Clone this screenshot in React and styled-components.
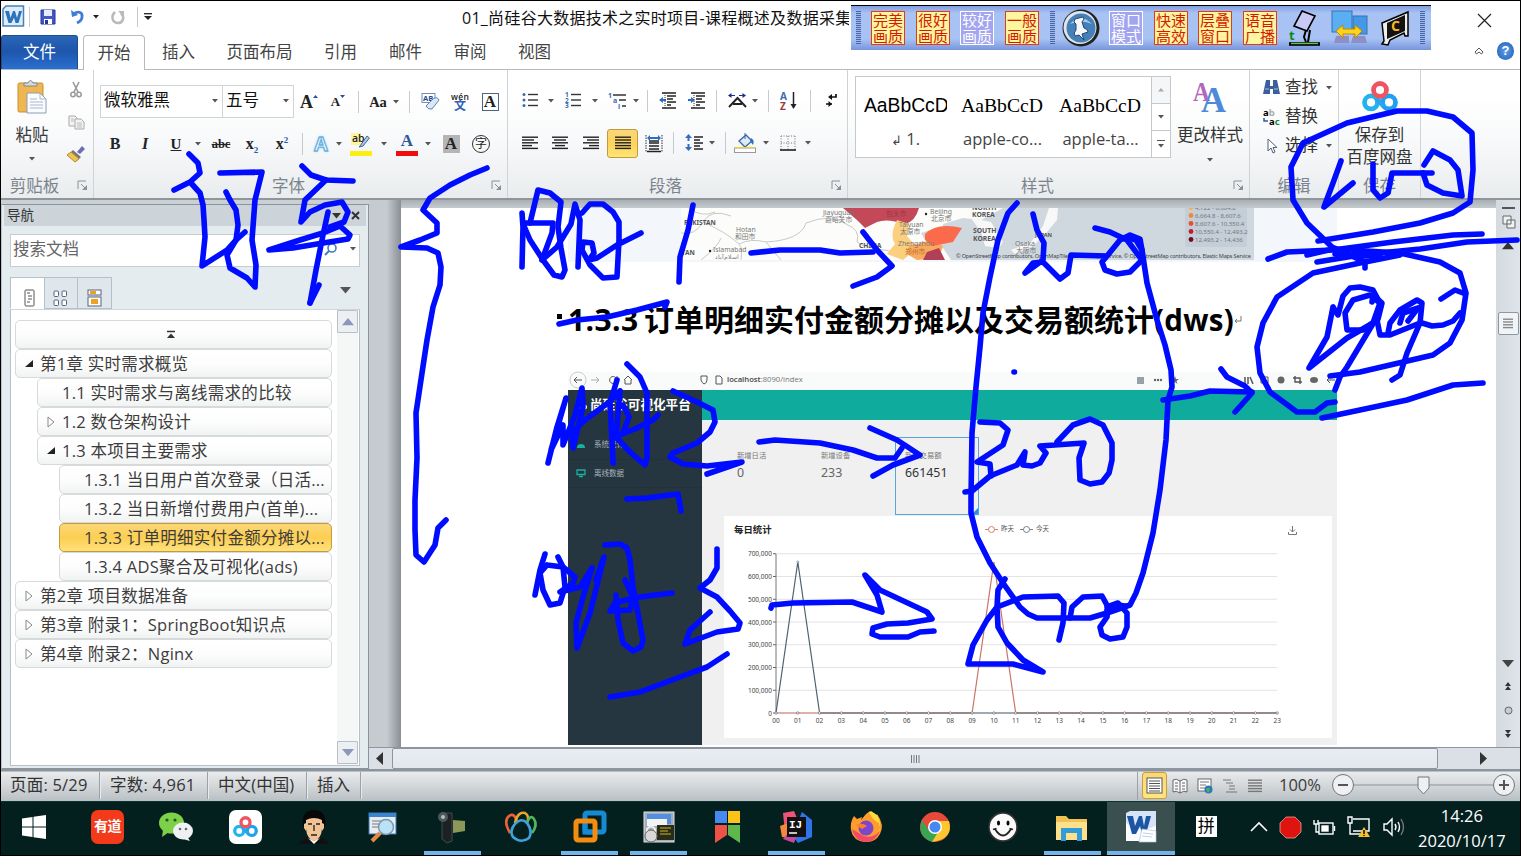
import React from 'react';
import styled, { createGlobalStyle, css } from 'styled-components';

const UI = '"Open Sans", "Noto Sans CJK SC", sans-serif';

const Global = createGlobalStyle`
  body { margin: 0; overflow: hidden; background: #000; font-family: ${UI}; }
  * { box-sizing: border-box; }
  svg { display: block; flex: none; overflow: visible; }
`;

/* ---------- window frame ---------- */
const Screen = styled.div`
  position: relative; width: 1521px; height: 856px; overflow: hidden;
  display: flex; flex-direction: column; background: #fff;
  border: 1px solid #000; font-size: 16.5px; line-height: 1; color: #3b3b3b; white-space: nowrap;
`;
const TitleBar = styled.header`
  height: 34px; flex: none; display: flex; align-items: center; padding-left: 1px; padding-bottom: 3px; background: #fff;
`;
const QuickSlot = styled.div`
  width: ${p => p.$w}px; flex: none; display: flex; justify-content: center;
`;
const VLine = styled.i`
  width: 1px; height: ${p => p.$h || 22}px; flex: none; background: ${p => p.$c || '#c4cacd'};
`;
const Title = styled.div`
  margin-left: 306px; width: 387px; overflow: hidden; font-size: 16px; letter-spacing: 0.27px; line-height: 26px; color: #111; padding-top: 3px;
`;
const TabRow = styled.nav`
  height: 35px; flex: none; display: flex; align-items: stretch; border-bottom: 1px solid #b6babf;
`;
const FileTab = styled.div`
  width: 77px; border-radius: 3px 3px 0 0; color: #fff; display: flex; align-items: center; justify-content: center;
  background: linear-gradient(#2b66b8, #1d56ab 45%, #2a6fd0); border: 1px solid #1e4d94; border-bottom: 0;
`;
const Tab = styled.div`
  width: ${p => p.$w}px; display: flex; align-items: center; justify-content: center; color: #444;
  ${p => p.$on && css`margin: 0 0 -1px 5px; border: 1px solid #b6babf; border-bottom: 0; border-radius: 4px 4px 0 0; background: #fff;`}
  ${p => !p.$on && 'padding-left: 2px;'}
`;
const TabEnd = styled.div`
  margin-left: auto; display: flex; align-items: center; gap: 13px; padding: 0 6px 3px 0;
`;
const Help = styled.div`
  width: 17px; height: 18px; border-radius: 9px; background: radial-gradient(#5d9de8, #1d5db4); color: #fff;
  font: bold 13px/18px "Liberation Sans", sans-serif; text-align: center;
`;

/* ---------- ribbon ---------- */
const Ribbon = styled.section`
  height: 130px; flex: none; display: flex; background: linear-gradient(#fff 20%, #f8f9fa 55%, #e9ecee);
  border-bottom: 2px solid #8e959b;
`;
const Group = styled.div`
  position: relative; width: ${p => p.$w}px; flex: none; display: flex; flex-direction: column; border-right: 1px solid #ced3d7;
`;
const GroupBody = styled.div`height: 104px; display: flex; ${p => p.$col && 'flex-direction: column;'}`;
const GroupLabel = styled.div`
  height: 24px; display: flex; align-items: center; justify-content: center; color: #7b848e; padding-right: ${p => p.$r || 0}px;
`;
const Launcher = styled.div`position: absolute; right: 5px; bottom: 7px;`;
const ToolRow = styled.div`
  height: ${p => p.$h}px; display: flex; align-items: center; padding-left: ${p => p.$l || 6}px; ${p => p.$t && `margin-top: ${p.$t}px;`}
`;
const Tool = styled.div`
  width: ${p => p.$w}px; margin-left: ${p => p.$ml || 0}px; flex: none; display: flex; align-items: center; justify-content: center;
  ${p => p.$on && css`height: 29px; border: 1px solid #c09a3c; border-radius: 3px; background: linear-gradient(#fbd77a, #fcd35c 50%, #ffe575);`}
`;
const Combo = styled.div`
  width: ${p => p.$w}px; height: 33px; margin-right: ${p => p.$mr || 0}px; border: 1px solid #cfd4d6; background: #fff; display: flex; align-items: center;
  justify-content: space-between; padding: 0 4px 2px 3px; color: #111; flex: none;
`;
const Glyph = styled.span`
  font-family: "Liberation Serif", serif; font-weight: ${p => p.$b ? 700 : 400}; font-size: ${p => p.$s || 18}px; color: ${p => p.$c || '#222'};
  font-style: ${p => p.$i ? 'italic' : 'normal'}; text-decoration: ${p => p.$u || 'none'}; line-height: 20px;
  sup, sub { font-size: 9px; color: #2a5caa; line-height: 0; }
`;
const BoxedA = styled(Glyph)`
  width: 17px; height: 18px; line-height: 16px; text-align: center;
  ${p => p.$shade ? 'background:#b5b5b5; line-height:18px;' : 'border: 1px solid #4b6584; background: #fff;'}
`;
const CircleChar = styled.span`
  width: 18px; height: 18px; border: 1px solid #333; border-radius: 9px; font-size: 12px; line-height: 15px; text-align: center; color: #222;
`;
const ColorMark = styled.div`
  display: flex; flex-direction: column; align-items: center; height: 24px; width: 22px;
  border-bottom: 5px solid ${p => p.$c};
  ${Glyph} { line-height: 18px; }
`;
const Outlined = styled(Glyph)`
  font-family: "Liberation Sans", sans-serif; color: #fff; -webkit-text-stroke: 1.3px #6ab0de; text-shadow: 0 0 3px #7cc4f0;
`;
const PasteCol = styled.div`width: 62px; display: flex; flex-direction: column; align-items: center; padding-top: 10px; gap: 13px;`;
const ClipCol = styled.div`display: flex; flex-direction: column; align-items: center; padding-top: 12px; gap: 16.5px; width: 26px;`;
const Gallery = styled.div`
  margin: 6px 0 0 7px; width: 316px; height: 82px; display: flex; border: 1px solid #c3c9cc; background: #fff; flex: none;
`;
const StyleItem = styled.div`
  width: ${p => p.$w}px; display: flex; flex-direction: column; align-items: center; overflow: hidden; padding-top: 17px; gap: 14px; color: #444;
  small { font-size: 13px; }
`;
const Preview = styled.div`
  font-family: ${p => p.$serif ? '"Liberation Serif", serif' : '"Liberation Sans", sans-serif'}; width: 83px; overflow: hidden;
  font-size: ${p => p.$serif ? 19.7 : 19.3}px; line-height: 23px; color: #000;
`;
const GalleryScroll = styled.div`
  margin-left: auto; width: 19px; display: flex; flex-direction: column; border-left: 1px solid #c3c9cc; background: #f5f6f7;
  div { flex: 1; display: flex; flex-direction: column; gap: 3px; align-items: center; justify-content: center; }
  div + div { border-top: 1px solid #c3c9cc; background: #fff; }
`;
const Dash = styled.i`width: 8px; height: 1px; background: #555;`;
const BigButton = styled.div`
  width: ${p => p.$w}px; display: flex; flex-direction: column; align-items: center; padding-top: 11px; gap: ${p => p.$gap}px; color: #333;
`;
const EditRow = styled.div`height: 29px; display: flex; align-items: center; padding-left: 10px; gap: 5px; color: #333; svg:last-child { margin-left: 3px; }`;
const IconBox = styled.div`width: 20px; display: flex; justify-content: center;`;

/* ---------- screen broadcast toolbar ---------- */
const CastBar = styled.div`
  position: absolute; left: 850px; top: 0; width: 580px; height: 49px; border-top: 4px solid #fff; display: flex; align-items: center;
  background: linear-gradient(#000 1px, #7f9ee0 1px, #a9c2f4 8px, #a9c2f4 75%, #7795dc); padding: 2px 0 2px 5px;
`;
const Grip = styled.i`width: 5px; height: 33px; margin-left: ${p => p.$ml || 0}px; background: repeating-linear-gradient(#4666a8 0 1px, #9fb7ea 1px 2px); flex: none;`;
const CastButton = styled.div`
  width: 34px; height: 34px; margin-left: ${p => p.$ml}px; flex: none; font: 15px/16px "Noto Sans CJK SC", sans-serif; text-align: center; white-space: pre-line;
  color: ${p => p.$off ? '#fff' : '#d41b00'}; background: ${p => p.$off ? '#a2a5f0' : '#fdf5a0'}; border: 1px solid ${p => p.$off ? '#fff' : '#e23a1c'};
`;
const CastIcon = styled.div`margin-left: ${p => p.$ml}px; flex: none;`;
const CloseX = styled.div`position: absolute; left: 1476px; top: 12px;`;

/* ---------- main split ---------- */
const Main = styled.main`height: 570px; flex: none; display: flex; background: #cbd0d5;`;
const NavPane = styled.aside`
  width: 368px; margin-top: 4px; display: flex; flex-direction: column; background: #e4ecf0; border: 1px solid #8b939b; border-left-color: #b9c3cb; border-bottom-width: 2px;
  padding: 0 2px;
`;
const NavHead = styled.div`
  height: 21px; display: flex; align-items: center; background: #ccd3d9; font-size: 13.5px; color: #333; padding: 0 6px 0 3px;
  svg { margin-left: auto; } svg + svg { margin-left: 10px; }
`;
const SearchBox = styled.div`
  margin: 8px 6px 0 6px; height: 33px; border: 1px solid #c5ccd2; background: #fff; display: flex; align-items: center; padding: 0 3px 3px 2px; color: #666;
  svg { margin-left: auto; } svg + svg { margin-left: 13px; }
`;
const NavTabs = styled.div`margin: 10px 6px 0 6px; height: 32px; display: flex; svg:last-child { margin: 10px 9px 0 auto; }`;
const NavTab = styled.div`
  width: 34.5px; border: 1px solid #b6c0c8; margin-right: -1px; display: flex; align-items: center; justify-content: center; background: ${p => p.$on ? '#fff' : '#dfe6ec'};
  border-bottom-color: ${p => p.$on ? '#fff' : '#b6c0c8'};
`;
const NavList = styled.div`
  flex: 1; margin: 0 6px 2px 6px; border: 1px solid #b6c0c8; border-top-color: #cfd6db; background: #fff; display: flex; padding: 0 1px 0 4px; justify-content: space-between;
`;
const Tree = styled.div`width: 317px; padding-top: 10px; display: flex; flex-direction: column; align-items: flex-end;`;
const TreeItem = styled.div`
  width: ${p => 317 - p.$lv * 22}px; height: 29px; flex: none; display: flex; align-items: center; border: 1.5px solid #d6dadb; border-radius: 5px;
  background: ${p => p.$on ? 'linear-gradient(#fbd777, #fcce52 50%, #ffe27a)' : 'linear-gradient(#fff, #fdfdfd 50%, #f1f3f3)'};
  ${p => p.$on && 'border-color:#c29b41;'} padding: 0 5px 0 0; color: #3c3c3c;
  ${p => p.$center && 'justify-content: center;'}
`;
const Twist = styled.span`width: 24px; display: flex; justify-content: center; flex: none; padding-left: 2px;`;
const Entry = styled.span`overflow: hidden; line-height: 22px; letter-spacing: 0.26px;`;
const NavScroll = styled.div`width: 21px; display: flex; flex-direction: column; justify-content: space-between; background: #f5f6f6; padding-bottom: 1px;`;
const ScrollBtn = styled.div`height: 23px; border: 1px solid #b9bfc6; background: #edf0f3; display: flex; align-items: center; justify-content: center; border-radius: 1px;`;

const DocColumn = styled.section`flex: 1; display: flex; flex-direction: column; min-width: 0;`;
const DocRow = styled.div`height: 547px; flex: none; display: flex; background: linear-gradient(#a8afb4, #c5cacd 8px);`;
const Gutter = styled.div`width: 32px; flex: none; background: linear-gradient(90deg, #c5cbcf 55%, #888f95);`;
const Page = styled.article`
  width: 1095px; margin-top: 8px; flex: none; background: #fff; display: flex; flex-direction: column; padding-left: 167px; overflow: hidden;
`;
const MapStrip = styled.div`width: 769px; height: 54px; display: flex; background: #f3f7fb; flex: none; svg { margin-left: 113px; background: #fcfcfa; overflow: hidden; }`;
const Heading = styled.h3`
  margin: 0 0 0 -12px; height: 110px; padding-top: 5px; flex: none; display: flex; align-items: center; font-size: 30px; font-weight: 700; color: #000;
`;
const HeadNum = styled.span`font-size: 30px; width: 76px; letter-spacing: 0.4px; margin-left: 2px;`;
const HeadTail = styled.span`font-size: 29.5px; letter-spacing: 0.3px;`;
const HBullet = styled.i`width: 5px; height: 5px; margin: 0 4px 6px 1px; background: #000;`;
const VScroll = styled.div`flex: 1; background: linear-gradient(90deg, #d5dae0, #dfe4ea); display: flex; flex-direction: column; align-items: center;`;
const Spacer = styled.i`height: ${p => p.$h}px; flex: none;`;
const VThumb = styled.div`
  width: 21px; height: 23px; border: 1px solid #8f979f; border-radius: 2px; background: #f1f4f7; display: flex; align-items: center; justify-content: center; flex: none;
`;
const HScroll = styled.div`height: 23px; display: flex; align-items: center; background: #dbe0e7; border-top: 1px solid #8d95a0; border-bottom: 1px solid #8d95a0; padding-left: 7px;`;
const HThumb = styled.div`
  width: 1046px; height: 21px; border: 1px solid #8d95a0; border-radius: 2px; background: linear-gradient(#e9edf2, #e2e7ed); display: flex; align-items: center; justify-content: center; margin: 0 42px 0 9px;
`;

/* ---------- dashboard figure ---------- */
const Shot = styled.div`width: 769px; height: 373px; display: flex; flex-direction: column; flex: none; background: #f0f0f0;`;
const UrlBar = styled.div`height: 18px; flex: none; background: #f9fafa; display: flex; align-items: center; padding: 0 3px 3px; font-size: 7.7px; color: #777; b { font-weight: 600; color: #444; }`;
const UrlTools = styled.svg`margin-left: auto;`;
const ShotBody = styled.div`flex: 1; display: flex; min-height: 0;`;
const Side = styled.div`width: 134px; background: #253641; color: #aab3b9; font-size: 7.5px;`;
const Brand = styled.div`height: 31px; color: #fff; font-size: 12.6px; font-weight: 700; display: flex; align-items: center; gap: 3px; padding-left: 7px;`;
const SideItem = styled.div`height: 28.5px; display: flex; align-items: center; gap: 8px; padding-left: 8px; border-bottom: 1px solid #22313b; &:nth-of-type(2) { margin-top: 10px; }`;
const Content = styled.div`flex: 1; display: flex; flex-direction: column;`;
const Teal = styled.div`height: 31px; flex: none; background: #0fab9d; border-bottom: 1px solid #e9f4f3;`;
const Cards = styled.div`height: 95px; flex: none; display: flex; padding: 16px 0 0 25px;`;
const Card = styled.div`
  width: 84px; height: 78px; padding: 12px 0 0 9px; display: flex; flex-direction: column; gap: 5px; font-size: 7.3px; line-height: 10px; color: #777; position: relative;
  border: 1px solid ${p => p.$on ? '#55a5dc' : 'transparent'};
  strong { font: 400 12.4px/15px "Noto Sans", sans-serif; color: ${p => p.$on ? '#333' : '#666'}; }
`;
const Corner = styled.i`position: absolute; right: 0; bottom: 0; border: 3px solid #2294e6; border-top-color: transparent; border-left-color: transparent;`;
const ChartPanel = styled.div`margin-left: 22px; width: 608px; height: 222px; background: #fff; flex: none; display: flex; flex-direction: column;`;
const ChartHead = styled.div`height: 28px; display: flex; align-items: center; padding: 0 35px 0 10px; font-size: 6.5px; color: #555; b { font-size: 9.4px; color: #222; width: 251px; }`;
const Legend = styled.span`display: flex; align-items: center; gap: 3px; flex: 1; padding-bottom: 2px; svg:nth-of-type(2) { margin-left: 3px; }`;

/* ---------- status bar ---------- */
const StatusBar = styled.footer`
  height: 31px; flex: none; display: flex; align-items: center; background: linear-gradient(#8b939b 1px, #e9ebed 2px, #d6dadc 45%, #b9bfc4);
`;
const StatusText = styled.div`
  width: ${p => p.$w}px; text-align: left; padding-left: ${p => p.$l}px; border-right: 1px solid #9aa2a8; box-shadow: 1px 0 #e8ebed; height: 27px; line-height: 25px; color: #333; flex: none; letter-spacing: ${p => p.$ls || 0}px;
`;
const ViewIcons = styled.div`margin-left: auto; display: flex; align-items: center; height: 28px; border-left: 1px solid #9aa2a8; padding-left: 4px;`;
const ViewBtn = styled.div`
  width: ${p => p.$w || 25}px; height: 27px; display: flex; align-items: center; justify-content: center;
  ${p => p.$on && 'border: 1px solid #c89f3c; border-radius: 3px; background: linear-gradient(#fbd77a, #ffe67c);'}
`;
const Zoom = styled.div`width: 65px; padding: 0 0 1px 12px;`;

/* ---------- taskbar ---------- */
const TaskBar = styled.footer`height: 54px; flex: none; display: flex; background: #03201f; border-top: 1px solid #0b3332; color: #fff;`;
const TaskButton = styled.div`
  width: ${p => p.$w || 68.93}px; flex: none; display: flex; align-items: center; justify-content: center; padding: 0 ${p => p.$pr || 0}px 3px 0; position: relative;
  background: ${p => p.$on ? '#3a504f' : 'transparent'};
`;
const Running = styled.i`position: absolute; bottom: 0; left: ${p => p.$full ? 0 : 6}px; right: ${p => p.$full ? 0 : 6}px; height: 4px; background: #74b4ea;`;
const RedTile = styled.div`width: 33px; height: 34px; border-radius: 7px; background: #f33a1b; font-weight: 700; font-size: 14px; line-height: 32px; text-align: center; letter-spacing: -0.5px;`;
const WhiteTile = styled.div`width: 33px; height: 34px; border-radius: 7px; background: #fff; display: flex; align-items: center; justify-content: center;`;
const Ime = styled.div`margin-left: 21px; width: 21px; height: 21px; align-self: center; background: #fff; color: #000; font-size: 17px; line-height: 20px; text-align: center; margin-bottom: 4px; flex: none;`;
const Tray = styled.div`margin-left: 33px; display: flex; align-items: center; gap: 12px; flex: none; padding-bottom: 3px;`;
const Clock = styled.div`margin-left: 10px; width: 98px; text-align: center; line-height: 25px; padding-top: 1px; font-size: 16.5px; flex: none;`;

/* ---------- handwriting ---------- */
const InkLayer = styled.svg`
  position: absolute; left: -1px; top: -1px; pointer-events: none; fill: none; stroke: #000cff; stroke-width: 5.6; stroke-linecap: round; stroke-linejoin: round;
`;
const strokes = [
  '189,154 198,163 200,173 190,182 174,190 190,182 200,193 203,205 204,220 205,237 202,266 227,250 236,240 245,232',
  '220,173 262,172 255,200 252,240 256,265 255,287 247,278 230,268 227,255 236,240 238,225 236,210 230,200 226,192',
  '302,166 311,175 326,180 353,181', '326,180 305,200 301,222 310,212 325,205 342,202 348,212 344,222 330,227',
  '269,250 300,240 323,233 340,226 350,235 348,239 323,243 293,248 269,250', '328,212 323,235 316,270 310,303', '310,303 319,285',
  '487,168 470,175 450,185 430,198 423,210 437,223 437,233 420,240 401,247 427,248 438,253 441,267 440,285 433,307 427,340 422,373 416,413 417,458 415,500 415,530 416,555 424,562 435,545 438,528 446,520',
  '522,213 523,227 522,267', '523,223 553,223 552,233 542,260',
  '530,223 538,190 550,193 561,202 558,227 561,248 565,270 562,277 554,275 543,260 530,240 524,226',
  '542,260 557,247 571,224 575,204 580,220 578,267',
  '582,213 590,204 603,204 613,212 619,222 619,240 617,277 603,278 590,265 582,250 583,242 592,243 594,253 589,260 597,258 617,245 641,233',
  '693,205 688,230 680,257 679,282', '751,253 780,250 820,250 840,253 873,252', '863,232 877,250 892,266 877,277 853,286',
  '559,324 577,320 607,317 637,310 667,302 665,307',
  '1017,203 1008,213 998,240 990,277 983,313 980,347 976,387 972,433 971,498 971,513 977,537 990,563 1003,583 1020,607 1028,614 1037,618 1090,618 1107,613 1130,605 1136,593 1143,573 1153,533 1160,490 1166,440 1168,400 1172,387 1171,370 1165,345 1157,320 1147,283 1142,250 1136,240 1127,238',
  '1033,214 1037,230 1044,243 1043,260 1025,273 1033,263 1043,262 1060,279 1068,273 1071,255 1107,256 1120,240 1130,235 1140,239 1142,250 1142,260 1130,272 1117,274 1105,270 1102,262 1107,256',
  '1095,228 1110,232 1127,240 1142,260', '1014,372 1014.5,372',
  '980,422 1000,423 1008,430 1003,445 977,462 990,464 991,476',
  '965,492 972,491 990,476 1017,465 1025,452 1023,465 1032,466 1040,463 1046,453 1040,446 1084,443 1079,458 1080,480 1090,484 1102,482 1109,473 1112,460 1112,443 1103,425 1090,419 1073,425 1057,442',
  '1163,400 1190,396 1210,391 1252,392', '1221,369 1227,377 1245,386 1252,393 1235,412',
  '1365,268 1365,262 1332,247 1307,223 1293,200 1291,167 1303,143 1347,123 1397,111 1427,111 1453,117 1472,133 1473,170 1470,202 1453,213 1420,223 1373,232 1318,241',
  '1341,161 1333,183 1324,207 1353,183', '1373,164 1373,190 1380,198 1388,193 1392,173 1432,173',
  '1424,165 1433,151 1450,160 1458,170 1462,196 1443,193 1427,185 1423,173',
  '1268,259 1287,252 1333,250 1393,242 1453,235 1482,234', '1317,262 1360,255 1420,249 1467,242 1517,240',
  '1307,255 1333,249 1400,253 1440,262 1460,273 1466,293 1462,320 1450,343 1433,355 1403,362 1360,372 1330,376',
  '1335,254 1360,256 1380,256', '1400,255 1360,263 1313,273 1277,297 1263,323 1257,347 1260,373 1270,392 1297,412 1315,412 1327,403 1335,402',
  '1322,418 1360,410 1407,400 1453,385 1483,383',
  '1333,307 1327,337 1309,368 1347,338 1373,323 1380,303 1373,290 1360,287 1350,288 1343,296 1338,315 1333,307',
  '1380,303 1370,295 1353,300 1345,313 1347,330 1363,330 1378,319 1382,303 1373,295 1372,302', '1377,317 1347,367 1340,377 1335,390',
  '1377,320 1380,335 1390,335 1420,323 1422,303 1417,300 1400,310 1390,323 1388,333', '1400,323 1403,313 1418,308 1408,321',
  '1420,323 1407,353 1400,375 1392,380', '1422,323 1432,326 1443,325 1453,321 1460,313', '1441,299 1455,290 1463,293',
  '548,463 557,427 566,398 551,450 563,425 563,445 575,415 582,388 583,407 573,448 571,433 585,420 608,403 620,391',
  '617,380 610,403 612,440 613,463', '620,391 616,437 630,452 645,465 647,458 647,393 640,377 627,364', '623,405 629,417 623,433 615,437 637,428 653,420 658,415',
  '673,391 697,402 713,410 715,422 710,432 697,443 673,453 670,457 683,464 707,466 742,462 707,474',
  '759,442 775,440 820,443 853,450 877,458 895,458 902,448', '870,428 897,440 920,455 893,465 873,476', '627,499 647,498 678,494 681,511',
  '545,554 540,570 535,595', '547,565 540,573 543,590 550,605 560,603 565,587 563,567 547,565',
  '558,557 563,567 575,577 573,583 560,592 580,587 592,568', '592,568 583,597 576,623 577,648 590,613 600,573 604,557 596,580',
  '605,545 620,544 627,548 630,560 633,587 643,640 641,647 633,651 623,643 618,620 616,595', '625,580 633,597 630,610 610,611 615,603 633,598 655,595 672,593',
  '717,549 717,568 710,580 700,588 717,597 730,611 740,623 738,629 717,632 685,644 690,630 710,612', '610,697 640,692 680,677 707,667 727,654',
  '771,608 772,605 793,603 852,602 882,612 877,595 865,575 880,590 927,612 932,619 908,623 887,624 873,628 872,634 880,637 908,637 920,632 934,631',
  '1005,579 998,590 997,607 998,627 1007,643 1023,660 1043,672 1013,664 968,664 973,645 987,620 997,607 1023,597 1058,596 1064,603 1063,623 1059,640',
  '1070,618 1072,607 1083,597 1102,596 1108,607 1107,617 1100,627 1102,635 1110,639 1123,637 1127,627 1127,613 1118,603 1107,607',
  '1107,610 1118,605 1125,606',
];

/* ---------- small drawings ---------- */
const Down = ({ c = '#555', s = 6 }) => <svg width={s} height={s * 0.6} viewBox="0 0 10 6"><path d="M0 0H10L5 6Z" fill={c} /></svg>;
const Up = ({ c = '#8b98bb', s = 12 }) => <svg width={s} height={s * 0.6} viewBox="0 0 10 6"><path d="M0 6H10L5 0Z" fill={c} /></svg>;
const SideArrow = ({ left }) => <svg width="7" height="13" viewBox="0 0 7 13"><path d={left ? 'M7 0V13L0 6.5Z' : 'M0 0V13L7 6.5Z'} fill="#333" /></svg>;
const Lines = ({ rows, c = '#222', w = 16, gap = 2.8 }) => (
  <svg width={w} height={rows.length * gap}>{rows.map(([x, l], i) => <rect key={i} x={x} y={i * gap + 0.5} width={l} height="1.4" fill={c} />)}</svg>
);
const L = { l: [[0, 16], [0, 12], [0, 16], [0, 10], [0, 16]], c: [[0, 16], [2, 12], [0, 16], [3, 10], [0, 16]], r: [[0, 16], [4, 12], [0, 16], [6, 10], [0, 16]], j: [[0, 16], [0, 16], [0, 16], [0, 16], [0, 16]] };
const LaunchIcon = () => <Launcher><svg width="11" height="11"><path d="M1 9V1H9M4 4L8 8" stroke="#8a9095" fill="none" /><path d="M10 5V10H5Z" fill="#8a9095" /></svg></Launcher>;
const WordMark = () => (
  <svg width="23" height="23"><path d="M4 1H21.500V21H1V4Z" fill="#dcecfa" stroke="#4a80b4" strokeWidth="1.500" /><path d="M3 6H7L8.500 13L11 6H13L15 13L17 6H20L16.500 18H13.500L12 12.500L9.500 18H6.500Z" fill="#2c73bb" /></svg>
);
const WordTask = () => (
  <svg width="32" height="32"><path d="M1 2L5 0H31V30H1Z" fill="#d5e4f6" /><path d="M1 12Q15 22 31 15V30H1Z" fill="#fafcff" /><path d="M2 5H8L10 15L14 5H17L19 15L21 5H26L21 23H17L15 15L11 23H7Z" fill="#1d55a5" /><path d="M17 18L31 20V31H14Z" fill="#fff" stroke="#b0c3df" strokeWidth="0.700" /><path d="M18 22L28 23M17 25L27 26" stroke="#c3d0e4" /></svg>
);
const SaveIcon = () => <svg width="16" height="16"><path d="M1 1H15V15H1Z" fill="#4557c4" stroke="#27349a" /><rect x="4" y="1" width="8" height="6" fill="#e4ebfb" /><rect x="4" y="10" width="8" height="5" fill="#fff" /><rect x="5" y="11" width="3" height="4" fill="#27349a" /></svg>;
const UndoIcon = () => <svg width="15" height="15"><path d="M1 1L2 8L8 6" fill="#3f7ed0" /><path d="M3 6C7 1 13 3 12 8C12 11 9 13 7 14" stroke="#3f7ed0" strokeWidth="2.800" fill="none" /></svg>;
const RedoIcon = () => <svg width="14" height="14"><path d="M4 2C-1 7 2 13 7 13C12 13 14 7 10 3" stroke="#b8bbbe" strokeWidth="2.600" fill="none" /><path d="M7 1H13V7Z" fill="#b8bbbe" /></svg>;
const PasteIcon = () => (
  <svg width="30" height="34"><rect x="1" y="3" width="25" height="29" rx="1.500" fill="#efb651" stroke="#c98f31" /><path d="M7 6V3H11Q13.500 -2 16 3H20V6Z" fill="#d6dade" stroke="#7f8890" /><path d="M10 13H23L29 19V33H10Z" fill="#fafcff" stroke="#8b9cb4" /><path d="M23 13V19H29M13 19H20M13 22H26M13 25H26M13 28H26" stroke="#a9b6cc" fill="none" /></svg>
);
const CutIcon = () => <svg width="13" height="16"><path d="M3 0L8 10M9 0L4 10" stroke="#999" strokeWidth="1.600" /><circle cx="3" cy="12.500" r="2.200" stroke="#999" fill="none" strokeWidth="1.500" /><circle cx="9" cy="12.500" r="2.200" stroke="#999" fill="none" strokeWidth="1.500" /></svg>;
const CopyIcon = () => <svg width="17" height="15"><path d="M1 1H7L9 3V11H1Z" fill="#f3f3f3" stroke="#aaa" /><path d="M7 4H13L16 7V14H7Z" fill="#f3f3f3" stroke="#aaa" /><path d="M9 8H14M9 10H14M9 12H14M3 4H6M3 6H6" stroke="#bbb" /></svg>;
const BrushIcon = () => <svg width="18" height="16"><path d="M10 6L15 0L18 3L13 8Z" fill="#6a6fb4" /><path d="M6 4L14 11L12 13L4 6Z" fill="#777" /><path d="M4 6L12 13L8 16L0 9Z" fill="#eec455" stroke="#b98c26" /></svg>;
const Bullets = () => <svg width="16" height="15">{[1.5, 7, 12.5].map(y => <g key={y}><circle cx="2" cy={y} r="1.500" fill="#3a6ab2" /><path d={`M6 ${y}H16`} stroke="#333" strokeWidth="1.400" /></g>)}</svg>;
const Numbers = () => <svg width="16" height="15">{[1.5, 7, 12.5].map((y, i) => <g key={y}><text x="0" y={y + 2.5} fontSize="6.500" fontWeight="700" fill="#3a6ab2">{i + 1}</text><path d={`M6 ${y}H16`} stroke="#333" strokeWidth="1.400" /></g>)}</svg>;
const Multi = () => <svg width="19" height="18"><g fontSize="7" fontWeight="700" fill="#3a6ab2"><text x="0" y="6">1</text><text x="5" y="11">a</text><text x="10" y="17">i</text></g><path d="M5 3H18M11 8H18M14 14H18" stroke="#333" strokeWidth="1.400" /></svg>;
const Indent = ({ d }) => <svg width="18" height="17"><path d="M3 1H17M8 4H17M8 7H14M8 10H17M8 13H12M3 16H17" stroke="#222" strokeWidth="1.500" /><path d={d < 0 ? 'M0 8L4 5V7H7V9H4V11Z' : 'M7 8L3 5V7H0V9H3V11Z'} fill="#2f6fc3" /><path d="M6 1V17" stroke="#333" strokeDasharray="1 1" /></svg>;
const Distribute = () => <svg width="18" height="17"><path d="M1 0V17M17 0V17" stroke="#333" strokeDasharray="1.500 1" /><path d="M4 8H14M4 11H14M4 14H14M2 16.500H16M4 6H14" stroke="#222" strokeWidth="1.300" /><path d="M2 3L5 0V2H13V0L16 3L13 6V4H5V6Z" fill="#2f6fc3" /></svg>;
const AsianA = () => <svg width="19" height="15"><path d="M1 14L9.500 5L18 14M5 11H14" stroke="#222" strokeWidth="1.900" fill="none" /><path d="M0 2.500L3.500 0V2H7V3H3.500V5ZM18 2.500L14.500 0V2H11V3H14.500V5Z" fill="#1b2c8c" /></svg>;
const SortIcon = () => <svg width="18" height="18"><text x="0" y="8" fontSize="10" fontWeight="700" fill="#3a6ab2">A</text><text x="0" y="17.500" fontSize="10" fontWeight="700" fill="#9b3a3a">Z</text><path d="M13.500 0V14" stroke="#222" strokeWidth="1.500" /><path d="M10.500 12H16.500L13.500 17Z" fill="#222" /></svg>;
const MarksIcon = () => <svg width="12" height="15"><path d="M11 1V4H6M1 11H7" stroke="#111" strokeWidth="1.700" fill="none" /><path d="M3 4L7 1V7ZM7 11L3.500 8V14Z" fill="#111" /></svg>;
const Spacing = () => <svg width="18" height="18"><path d="M3.500 0L7 4H4.500V7H2.500V4H0ZM3.500 17L7 13H4.500V10H2.500V13H0Z" fill="#2f6fc3" /><path d="M9 3H18M9 6H15M9 9H18M9 12H15M9 15H18" stroke="#222" strokeWidth="1.400" /></svg>;
const Bucket = () => <svg width="22" height="20"><path d="M5 8L12 2L18 8L11 14Z" fill="#dceaf8" stroke="#3d6aa0" strokeWidth="1.300" /><path d="M11 6V0" stroke="#3d6aa0" /><path d="M17 5Q21 7 19 12L16 8Z" fill="#2f6fc3" /><rect x="0.500" y="15" width="21" height="4.500" fill="#fff" stroke="#999" /><path d="M1 14.500H21" stroke="#e9d23b" strokeWidth="1.200" /></svg>;
const Borders = () => <svg width="16" height="16"><path d="M1 1H15M1 8H15M1 1V15M8 1V15M15 1V15" stroke="#777" strokeDasharray="1 1.500" /><path d="M0 15H16" stroke="#111" strokeWidth="1.500" /></svg>;
const Eraser = () => <svg width="19" height="18"><rect x="1" y="0.500" width="13" height="9" fill="#fff" stroke="#6f8fbb" /><text x="2" y="8" fontSize="7.500" fontWeight="700" fill="#234b8a">AB</text><path d="M5 13L12 6Q16 3 18 7L11 16Q7 17 5 13Z" fill="#dbe7f5" stroke="#5f82b0" /></svg>;
const Wen = () => <svg width="18" height="18"><text x="0" y="6.500" fontSize="8.500" textLength="18" fontWeight="600" fill="#222">wén</text><text x="3" y="17" fontSize="12" fontWeight="700" fill="#2f62b8">文</text></svg>;
const ChangeStyles = () => <svg width="34" height="32" fontFamily="Liberation Serif, serif" fontWeight="700"><text x="0" y="20" fontSize="27" textLength="17" lengthAdjust="spacingAndGlyphs" fill="#b268b8">A</text><text x="8" y="31" fontSize="35" fill="#4f8ada" textLength="25" lengthAdjust="spacingAndGlyphs">A</text></svg>;
const Cloud = ({ s = 36 }) => <svg width={s} height={s * 0.86} viewBox="0 0 36 31"><g fill="none" strokeWidth="4.800"><circle cx="9" cy="21.500" r="6.500" stroke="#22b3ee" /><circle cx="27" cy="21.500" r="6.500" stroke="#22a0f0" /><path d="M14 17L22 25.500" stroke="#22a8ee" /><circle cx="18" cy="9" r="6.500" stroke="#ee5563" /></g></svg>;
const Binoc = () => <svg width="17" height="15"><path d="M3 0H7V6H10V0H14L17 14H10V9H7V14H0Z" fill="#3a5f9c" /><path d="M2 9H6M11 9H15" stroke="#a5c2ea" /></svg>;
const Replace = () => <svg width="18" height="18" fontWeight="700" fontFamily="Noto Sans, sans-serif"><text x="0" y="7.500" fontSize="9.500">a<tspan fill="#aaa">b</tspan></text><text x="6" y="16.500" fontSize="9.500">a<tspan fill="#1d8a2a">c</tspan></text><path d="M1 10V13H5" stroke="#2a5caa" fill="none" strokeWidth="1.500" /></svg>;
const Cursor = () => <svg width="10" height="16"><path d="M1 1V13L4 10L6 15L8 14L6 9.500H10Z" fill="#fff" stroke="#50617c" /></svg>;
const Pin = () => <svg width="38" height="38"><circle cx="19" cy="19" r="18.500" fill="#222" /><circle cx="18" cy="18.500" r="16.500" fill="#dfe5ec" /><circle cx="19" cy="19" r="14.500" fill="#4580b8" /><path d="M8 15Q18 3 30 15Q20 10 8 15Z" fill="#a8cdec" /><path d="M13 10L21 8L22 10L20 13L22 19Q26 20 26 23L20 25L22 31L17 26L13 27Q11 24 14 21L14 15L12 13Z" fill="#f4f8fc" stroke="#24486c" /></svg>;
const LampMonitor = () => <svg width="34" height="38"><path d="M14 2L27 7L19 22L6 17Z" fill="#c8caf5" stroke="#000" strokeWidth="1.600" /><path d="M18 21L16 28L18 33M22 21L20 33" stroke="#000" strokeWidth="2" fill="#ccc" /><path d="M1 35H32" stroke="#000" strokeWidth="3.600" /><path d="M3 34.500H30" stroke="#5fc53e" strokeWidth="1.400" /><text x="1" y="31" fontSize="13" fontWeight="700" fill="#0a8a1a">t</text></svg>;
const TwoMonitors = () => <svg width="38" height="36"><rect x="1" y="1" width="20" height="21" fill="#5aaef2" stroke="#3572b8" /><rect x="22" y="6" width="14" height="18" fill="#4498e6" stroke="#3572b8" /><path d="M5 26H18V33H3ZM22 26H34L36 33H20Z" fill="#8f8fc8" /><path d="M5 21L12 15V19H24V15L31 21L24 28V24H12V28Z" fill="#ffd21c" stroke="#c08a00" /></svg>;
const Speaker = () => <svg width="30" height="38"><path d="M2 14L28 3V27L25 27L24 24L10 31L8 36L2 35L4 32Z" fill="#eee" stroke="#000" strokeWidth="1.500" /><path d="M7 14L25 6V22L7 30Z" fill="#15120f" /><text x="11" y="22" fontSize="14" fontWeight="700" fill="#f3bb22">C</text></svg>;
const Doc = () => <svg width="17" height="17"><rect x="1" y="1" width="15" height="15" fill="#fff" stroke="#555" /><path d="M3 4H14M3 6.500H14M3 9H14M3 11.500H14M3 14H14" stroke="#555" /></svg>;
const Book = () => <svg width="16" height="16"><path d="M8 3Q4 0 1 2V14Q4 12 8 15Q12 12 15 14V2Q12 0 8 3V15M3 5H6M3 8H6M3 11H6M10 5H13M10 8H13M10 11H13" fill="#f8f8f8" stroke="#666" /></svg>;
const WebDoc = () => <svg width="16" height="16"><rect x="1" y="1" width="13" height="12" fill="#fff" stroke="#666" /><path d="M3 4H12M3 7H9M3 10H8" stroke="#777" /><circle cx="11.500" cy="11.500" r="4" fill="#2e78b8" /><path d="M9 11Q12 8 13 12L11 15Z" fill="#4fae58" /></svg>;

const tabs = [['插入', 65], ['页面布局', 97], ['引用', 65], ['邮件', 65], ['审阅', 64], ['视图', 65]];
const castA = [['完美\n画质', 8], ['很好\n画质', 11], ['较好\n画质', 10, 1], ['一般\n画质', 11]];
const castB = [['窗口\n模式', 9, 1], ['快速\n高效', 11], ['层叠\n窗口', 10], ['语音\n广播', 11]];
const tree = [
  [0, '第1章 实时需求概览', 'open'], [1, '1.1 实时需求与离线需求的比较'], [1, '1.2 数仓架构设计', 'shut'], [1, '1.3 本项目主要需求', 'open'],
  [2, '1.3.1 当日用户首次登录（日活...'], [2, '1.3.2 当日新增付费用户(首单)...'], [2, '1.3.3 订单明细实付金额分摊以...', null, 1], [2, '1.3.4 ADS聚合及可视化(ads)'],
  [0, '第2章 项目数据准备', 'shut'], [0, '第3章 附录1：SpringBoot知识点', 'shut'], [0, '第4章 附录2：Nginx', 'shut'],
];

function FontGroup() {
  return (
    <Group $w={414}>
      <GroupBody $col>
        <ToolRow $h={33} $t={15}>
          <Combo $w={123} $mr={-1}>微软雅黑<Down /></Combo><Combo $w={72}>五号<Down /></Combo>
          <Tool $w={30}><Glyph $b $s={18}>A</Glyph><svg width="5" height="16"><path d="M0 4H5L2.500 1Z" fill="#2a4f9c" /></svg></Tool>
          <Tool $w={28}><Glyph $b $s={13}>A</Glyph><svg width="5" height="16"><path d="M0 1H5L2.500 4Z" fill="#2a4f9c" /></svg></Tool>
          <Tool $w={12}><VLine /></Tool><Tool $w={28}><Glyph $b $s={14.5}>Aa</Glyph></Tool><Tool $w={8}><Down /></Tool><Tool $w={18}><VLine /></Tool>
          <Tool $w={24}><Eraser /></Tool><Tool $w={36}><Wen /></Tool><Tool $w={24}><BoxedA $b $s={17}>A</BoxedA></Tool>
        </ToolRow>
        <ToolRow $h={30} $t={11}>
          <Tool $w={30}><Glyph $b $s={16}>B</Glyph></Tool><Tool $w={30}><Glyph $b $i $s={16}>I</Glyph></Tool><Tool $w={32}><Glyph $b $s={15} $u="underline">U</Glyph></Tool><Tool $w={12}><Down /></Tool>
          <Tool $w={34}><Glyph $b $s={12.5} $u="line-through">abc</Glyph></Tool><Tool $w={28}><Glyph $b $s={16}>x<sub>2</sub></Glyph></Tool><Tool $w={32}><Glyph $b $s={16}>x<sup>2</sup></Glyph></Tool>
          <Tool $w={8}><VLine /></Tool><Tool $w={30}><Outlined $s={20} $b>A</Outlined></Tool><Tool $w={6}><Down /></Tool>
          <Tool $w={38}><ColorMark $c="#fbee12"><svg width="20" height="18"><rect width="10" height="12" y="1" fill="#fff3a0" /><text x="1" y="10" fontSize="10.500" fontWeight="600" fill="#222">ab</text><path d="M9 14L16 4L18.500 6L12 14L8 15Z" fill="#a9c6e6" stroke="#47699a" /></svg></ColorMark></Tool>
          <Tool $w={8}><Down /></Tool><Tool $w={38}><ColorMark $c="#ef0d0d"><Glyph $b $s={17} $c="#2d569c">A</Glyph></ColorMark></Tool><Tool $w={4}><Down /></Tool>
          <Tool $w={42}><BoxedA $b $shade $s={17}>A</BoxedA></Tool><Tool $w={18}><CircleChar>字</CircleChar></Tool>
        </ToolRow>
      </GroupBody>
      <GroupLabel $r={24}>字体</GroupLabel><LaunchIcon />
    </Group>
  );
}

function ParagraphGroup() {
  return (
    <Group $w={340}>
      <GroupBody $col>
        <ToolRow $h={33} $t={14}>
          <Tool $w={32}><Bullets /></Tool><Tool $w={10}><Down /></Tool><Tool $w={34}><Numbers /></Tool><Tool $w={10}><Down /></Tool><Tool $w={34}><Multi /></Tool><Tool $w={4}><Down /></Tool>
          <Tool $w={18}><VLine /></Tool><Tool $w={24}><Indent d={-1} /></Tool><Tool $w={34}><Indent d={1} /></Tool><Tool $w={4}><VLine /></Tool><Tool $ml={3} $w={32}><AsianA /></Tool><Tool $w={4}><Down /></Tool>
          <Tool $w={22}><VLine /></Tool><Tool $w={20}><SortIcon /></Tool><Tool $w={22}><VLine /></Tool><Tool $w={20}><MarksIcon /></Tool>
        </ToolRow>
        <ToolRow $h={30} $t={11}>
          <Tool $w={32}><Lines rows={L.l} /></Tool><Tool $w={28}><Lines rows={L.c} /></Tool><Tool $w={34}><Lines rows={L.r} /></Tool><Tool $on $w={31} $ml={-1}><Lines rows={L.j} /></Tool><Tool $w={31}><Distribute /></Tool>
          <Tool $w={8}><VLine /></Tool><Tool $w={34}><Spacing /></Tool><Tool $w={2}><Down /></Tool><Tool $w={24}><VLine /></Tool><Tool $w={16}><Bucket /></Tool><Tool $w={26}><Down /></Tool><Tool $w={18}><Borders /></Tool><Tool $w={22}><Down /></Tool>
        </ToolRow>
      </GroupBody>
      <GroupLabel $r={24}>段落</GroupLabel><LaunchIcon />
    </Group>
  );
}

function RibbonBar() {
  return (
    <Ribbon>
      <Group $w={93}>
        <GroupBody>
          <PasteCol><PasteIcon />粘贴<Down /></PasteCol>
          <ClipCol><CutIcon /><CopyIcon /><BrushIcon /></ClipCol>
        </GroupBody>
        <GroupLabel $r={25}>剪贴板</GroupLabel><LaunchIcon />
      </Group>
      <FontGroup /><ParagraphGroup />
      <Group $w={402}>
        <GroupBody>
          <Gallery>
            <StyleItem $w={99}><Preview>AaBbCcD</Preview><span><small>↲</small> 1.</span></StyleItem>
            <StyleItem $w={95}><Preview $serif>AaBbCcD</Preview><span>apple-co...</span></StyleItem>
            <StyleItem $w={101}><Preview $serif>AaBbCcD</Preview><span>apple-ta...</span></StyleItem>
            <GalleryScroll><div><Up s={6} c="#aaa" /></div><div><Down /></div><div><Dash /><Down /></div></GalleryScroll>
          </Gallery>
          <BigButton $w={79} $gap={14}><ChangeStyles />更改样式<Down /></BigButton>
        </GroupBody>
        <GroupLabel $r={22}>样式</GroupLabel><LaunchIcon />
      </Group>
      <Group $w={89}>
        <GroupBody $col>
          <Spacer $h={3} />
          <EditRow><IconBox><Binoc /></IconBox>查找<Down /></EditRow>
          <EditRow><IconBox><Replace /></IconBox>替换</EditRow>
          <EditRow><IconBox><Cursor /></IconBox>选择<Down /></EditRow>
        </GroupBody>
        <GroupLabel>编辑</GroupLabel>
      </Group>
      <Group $w={82}>
        <GroupBody><BigButton $w={83} $gap={5.5}><Cloud /><Spacer $h={4} /><span>保存到</span><span>百度网盘</span></BigButton></GroupBody>
        <GroupLabel>保存</GroupLabel>
      </Group>
    </Ribbon>
  );
}

function Navigation() {
  return (
    <NavPane>
      <NavHead>导航<Down s={9} c="#333" /><svg width="9" height="9"><path d="M1 1L8 8M8 1L1 8" stroke="#333" strokeWidth="2" /></svg></NavHead>
      <SearchBox>搜索文档<svg width="13" height="13"><circle cx="8" cy="5" r="4" fill="#fff" stroke="#3f7cc0" strokeWidth="1.600" /><path d="M5 8L1 12" stroke="#3f7cc0" strokeWidth="2" /></svg><Down /></SearchBox>
      <NavTabs>
        <NavTab $on><svg width="11" height="18"><rect x="1" y="1" width="9" height="16" rx="1" fill="#fff" stroke="#555" /><path d="M3 4H6M4 7H8M4 10H8M3 13H6" stroke="#555" /></svg></NavTab>
        <NavTab><svg width="15" height="17">{[[1, 1], [9, 1], [1, 10], [9, 10]].map(([x, y]) => <rect key={x + '-' + y} x={x} y={y} width="4.500" height="5.500" rx="1" fill="#fff" stroke="#56657c" />)}</svg></NavTab>
        <NavTab><svg width="15" height="18"><rect x="1" y="1" width="13" height="5" fill="#fff" stroke="#56657c" /><rect x="3" y="2" width="6" height="3" fill="#eda221" /><rect x="1" y="8" width="13" height="9" fill="#fff" stroke="#56657c" /><rect x="4" y="10" width="7" height="5" fill="#eda221" /></svg></NavTab>
        <Down s={11} />
      </NavTabs>
      <NavList>
        <Tree>
          <TreeItem $lv={0} $center><svg width="8" height="8"><path d="M0 0.500H8" stroke="#333" strokeWidth="1.500" /><path d="M0 7H8L4 2.500Z" fill="#333" /></svg></TreeItem>
          {tree.map(([lv, t, tw, on]) => (
            <TreeItem key={t} $lv={lv} $on={on}>
              <Twist>{tw === 'open' && <svg width="8" height="7"><path d="M0 7H8V0Z" fill="#222" /></svg>}{tw === 'shut' && <svg width="8" height="12"><path d="M1 1V11L7 6Z" fill="#fff" stroke="#888" /></svg>}</Twist>
              <Entry>{t}</Entry>
            </TreeItem>
          ))}
        </Tree>
        <NavScroll><ScrollBtn><Up /></ScrollBtn><ScrollBtn><Down s={12} c="#8b98bb" /></ScrollBtn></NavScroll>
      </NavList>
    </NavPane>
  );
}

function MapFigure() {
  return (
    <MapStrip>
      <svg width="573" height="52" fontFamily="Noto Sans, Noto Sans CJK SC, sans-serif" fontSize="6.800" fill="#777">
        <path d="M290 0H573V52H270L262 40L240 30L232 18L240 8L262 4Z" fill="#cfd8df" />
        <path d="M150 0L262 0L262 18L240 25L248 40L262 52H150Z" fill="#fcfcfa" />
        <path d="M258 0H322L300 12L282 10L262 16Z" fill="#fcfcfa" />
        <path d="M290 10L310 14L322 34L318 40L304 38L300 24Z" fill="#f7f8f7" />
        <path d="M368 0H377L376 12L366 24L352 38L334 46L330 42L350 34L362 18Z" fill="#f7f8f7" />
        <path d="M0 25Q14 28 22 14T50 8M22 14Q45 24 58 36Q70 30 85 34Q120 32 125 15Q150 5 165 16Q180 22 176 34Q190 44 240 44M8 0Q20 10 34 4M60 52Q62 40 58 36M20 52Q36 40 40 30M100 52Q94 45 85 34M170 0Q176 10 200 12" stroke="#c9c9c9" fill="none" />
        <path d="M162 0H238Q234 14 224 16Q206 10 196 14L184 20L176 12Z" fill="#c34959" />
        <path d="M216 12Q208 28 214 36L206 46L222 52L236 40L226 28L228 16Z" fill="#fbcf7d" />
        <path d="M228 38L250 32L262 38L258 50L236 52L226 46Z" fill="#fba95a" />
        <path d="M244 26Q256 14 281 20L272 34L252 38L244 32Z" fill="#fb6b4b" />
        <path d="M246 44L258 40L264 52H242Z" fill="#b04058" />
        <text x="142" y="7">Jiayuguan</text><text x="144" y="14">嘉峪关市</text><text x="55" y="24">Hotan</text><text x="54" y="31">和田市</text><text x="32" y="44">Islamabad</text><text x="34" y="51" fontSize="6">اسلام‌آباد</text>
        <text x="249" y="6">Beijing</text><text x="250" y="13">北京市</text><circle cx="245" cy="6" r="1.200" fill="#222" /><circle cx="29" cy="43" r="1.200" fill="#222" />
        <text x="218" y="19">Taiyuan</text><text x="219" y="26">太原市</text><text x="217" y="38">Zhengzhou</text><text x="224" y="46" fill="#b8713a">郑州市</text><text x="205" y="8" fill="#9a3645">包头市</text>
        <text x="334" y="38">Osaka</text><text x="335" y="45">大阪市</text>
        <g fontWeight="700" fill="#555"><text x="3" y="17" fontSize="6.500">PAKISTAN</text><text x="-3" y="47" fontSize="6.500">STAN</text><text x="178" y="40">CHINA</text><text x="291" y="2">NORTH</text><text x="291" y="9">KOREA</text><text x="292" y="25">SOUTH</text><text x="292" y="33">KOREA</text><text x="354" y="29" fontSize="5.500">JAPAN</text></g>
        <rect x="504" y="-4" width="62" height="43" rx="2" fill="#c3ced8" />
        <g fontSize="6" fill="#777">{[['#f5b04c', '4,722 - 6,664.8'], ['#f08a35', '6,664.8 - 8,607.6'], ['#e8502c', '8,607.6 - 10,550.4'], ['#c01f26', '10,550.4 - 12,493.2'], ['#6d0d1f', '12,493.2 - 14,436']].map(([c, t], i) => <g key={t}><circle cx="510" cy={i * 8 - 0.500} r="2.400" fill={c} /><text x="514" y={i * 8 + 2}>{t}</text></g>)}</g>
        <text x="275" y="50" fontSize="5.600" textLength="295" fill="#444">© OpenStreetMap contributors, OpenMapTiles, Elastic Maps Service, © OpenStreetMap contributors, Elastic Maps Service</text>
      </svg>
    </MapStrip>
  );
}

function LineChart() {
  const x = i => 52 + i * 21.79;
  return (
    <svg width="608" height="194" fontFamily="Noto Sans, sans-serif" fontSize="6.500" fill="#444">
      {[0, 1, 2, 3, 4, 5, 6, 7].map(i => <g key={i}><path d={`M52 ${169 - i * 22.75}H553`} stroke="#e3e3e3" /><path d={`M49 ${169 - i * 22.75}H52`} stroke="#666" /><text x="48" y={171.500 - i * 22.75} textAnchor="end">{i ? `${i}00,000` : '0'}</text></g>)}
      <path d="M52 10V169" stroke="#777" />
      <path d={`M52 169H${x(9)}L${x(10)} 18L${x(11)} 169H553`} stroke="#c87464" fill="none" strokeWidth="1.200" />
      <path d={`M52 169L${x(1)} 18L${x(2)} 169H553`} stroke="#4e626d" fill="none" strokeWidth="1.200" />
      {Array.from({ length: 24 }, (_, i) => <g key={i}><circle cx={x(i)} cy="169" r="1.200" fill="#fff" stroke="#667" strokeWidth="0.700" /><text x={x(i)} y="178.500" textAnchor="middle">{String(i).padStart(2, '0')}</text></g>)}
      <circle cx={x(1)} cy="18" r="1" fill="#fff" stroke="#667" strokeWidth="0.600" />
    </svg>
  );
}

function Dashboard() {
  return (
    <Shot>
      <UrlBar>
        <svg width="132" height="14" stroke="#555" fill="none"><circle cx="7" cy="7" r="8" stroke="#ccc" /><path d="M11 7H3M6 4L3 7L6 10" /><path d="M20 7H28M25 4L28 7L25 10" stroke="#aaa" /><path d="M45 5A3.500 3.500 0 1 0 45 9M46 3V6H43" /><path d="M53 7L57 3L61 7M54 7V11H60V7" /><path d="M130 3V7Q131 10 133 11Q136 10 136 7V3Z" /></svg>
        <svg width="22" height="14"><path d="M13 3H17L19 5V11H13Z" fill="none" stroke="#555" /></svg>
        <b>&nbsp;localhost</b>:8090/index
        <UrlTools width="200" height="14" fill="#666"><rect x="3" y="4" width="7" height="7" fill="#9aa0a8" /><circle cx="21" cy="7" r="1.200" /><circle cx="24" cy="7" r="1.200" /><circle cx="27" cy="7" r="1.200" /><path d="M41 3L42 6H45L42.500 8L43.500 11L41 9L38.500 11L39.500 8L37 6H40Z" /><path d="M111 4V11M114 4V11M116 4L119 11" stroke="#555" strokeWidth="1.500" /><path d="M127 4H134V10H127Z" fill="none" stroke="#555" /><circle cx="147" cy="7" r="3.500" /><path d="M161 3V9H168M159 5H166V11" stroke="#555" fill="none" strokeWidth="1.400" /><ellipse cx="180" cy="7" rx="4" ry="3" /><path d="M193 7H201M196 4L193 7L196 10" fill="none" stroke="#555" /></UrlTools>
      </UrlBar>
      <ShotBody>
        <Side>
          <Brand><svg width="12" height="9"><ellipse cx="5" cy="4" rx="5" ry="4" fill="#fff" /><ellipse cx="9" cy="6" rx="3" ry="2.500" fill="#fff" /></svg>尚硅谷可视化平台</Brand>
          <SideItem><svg width="10" height="8"><path d="M1 7A4 4 0 0 1 9 7Z" fill="#18b0a1" /></svg>系统统计</SideItem>
          <SideItem><svg width="10" height="8"><path d="M1 1H9V5.500H1ZM3 7.500H7" fill="none" stroke="#18b0a1" strokeWidth="1.300" /></svg>离线数据</SideItem>
        </Side>
        <Content>
          <Teal />
          <Cards><Card>新增日活<strong>0</strong></Card><Card>新增设备<strong>233</strong></Card><Card $on>新增交易额<strong>661451</strong><Corner /></Card></Cards>
          <ChartPanel>
            <ChartHead><b>每日统计</b>
              <Legend><svg width="13" height="7"><path d="M0 3.500H13" stroke="#d08070" /><circle cx="6.500" cy="3.500" r="3" fill="#fff" stroke="#d08070" /></svg>昨天<svg width="13" height="7"><path d="M0 3.500H13" stroke="#70808a" /><circle cx="6.500" cy="3.500" r="3" fill="#fff" stroke="#70808a" /></svg>今天</Legend>
              <svg width="9" height="9"><path d="M4.500 0V6M2 3.500L4.500 6L7 3.500M0.500 6V8.500H8.500V6" stroke="#777" fill="none" /></svg>
            </ChartHead>
            <LineChart />
          </ChartPanel>
        </Content>
      </ShotBody>
    </Shot>
  );
}

const WindowsLogo = () => <svg width="24" height="24"><path d="M0 3.500L10.500 2V11.500H0ZM11.500 1.800L24 0V11.500H11.500ZM0 12.500H10.500V22L0 20.500ZM11.500 12.500H24V24L11.500 22.200Z" fill="#fff" /></svg>;

const appIcons = [
  [<RedTile>有道</RedTile>],
  [<svg width="34" height="30"><ellipse cx="12.500" cy="11" rx="12.500" ry="10.500" fill="#7cd149" /><path d="M4 18L3 25L10 20Z" fill="#7cd149" /><ellipse cx="24" cy="19" rx="10" ry="8.500" fill="#eef0f2" /><path d="M28 24L31 29L24 27Z" fill="#eef0f2" /><g fill="#235b14"><circle cx="8" cy="8" r="1.600" /><circle cx="16" cy="8" r="1.600" /></g><g fill="#666"><circle cx="21" cy="17" r="1.300" /><circle cx="27" cy="17" r="1.300" /></g></svg>],
  [<WhiteTile><Cloud s={25} /></WhiteTile>],
  [<svg width="30" height="34"><path d="M4 16Q2 0 15 0Q28 0 26 16L23 20H7Z" fill="#080808" /><path d="M7 10Q15 6 23 10V19Q22 29 15 31Q8 29 7 19Z" fill="#f2c495" /><path d="M5 14L7 13V21L5 18ZM25 14L23 13V21L25 18Z" fill="#f2c495" /><path d="M0 34Q3 29 10 28L15 33L20 28Q27 29 30 34Z" fill="#111" /><path d="M9 28L15 34L21 28L15 31Z" fill="#fff" /><path d="M9 14H13M17 14H21M15 15V21M12 25H18" stroke="#222" strokeWidth="1.300" /></svg>],
  [<svg width="30" height="30"><rect x="1" y="1" width="27" height="21" fill="#e9edf1" stroke="#3b77b8" /><rect x="1" y="1" width="27" height="4" fill="#3a85d0" /><path d="M4 9H16M4 12H12M4 15H12" stroke="#777" /><circle cx="18" cy="15" r="7.500" fill="#b9e2f7" stroke="#7b98ac" strokeWidth="1.500" /><path d="M12 21L4 29" stroke="#e28b43" strokeWidth="4" /></svg>],
  [<svg width="28" height="32"><path d="M4 2H14V30L9 32L4 28Z" fill="#1c2224" stroke="#414a4c" /><circle cx="5" cy="6" r="5" fill="#4e585b" /><circle cx="5" cy="6" r="2" fill="#b4bcc0" /><path d="M15 9L27 10V20L15 22Z" fill="#8b985a" /></svg>, 1],
  [<svg width="32" height="32" fill="none" strokeWidth="2.600"><path d="M5 22Q-2 10 4 5Q10 1 12 12" stroke="#ee6038" /><path d="M10 12Q13 0 20 2Q25 5 22 12" stroke="#e9a42e" /><path d="M22 11Q26 3 29 8Q33 14 27 22" stroke="#54b65a" /><path d="M10 13Q16 6 22 12Q28 20 24 27Q16 33 8 26Q4 20 10 13Z" stroke="#3da3dd" /></svg>],
  [<svg width="34" height="34" fill="none" strokeWidth="5"><rect x="12" y="3" width="19" height="19" rx="2" stroke="#168bd2" /><rect x="3" y="11" width="19" height="19" rx="2" stroke="#f58c10" /><path d="M12 14V22H19" stroke="#168bd2" strokeWidth="5" /></svg>, 1],
  [<svg width="32" height="32"><rect x="1" y="1" width="30" height="30" fill="#a4adb8" stroke="#dce2e8" /><rect x="4" y="3" width="24" height="10" fill="#538fdd" /><rect x="4" y="8" width="20" height="7" fill="#f1f4f7" /><rect x="14" y="14" width="17" height="15" fill="#292c17" /><path d="M17 17H28M17 20H25M17 23H28" stroke="#cfb52d" /><path d="M4 22V18Q8 13 12 18V22" stroke="#eee" strokeWidth="2" fill="none" /><circle cx="8" cy="25" r="6" fill="#d8d8d8" stroke="#666" /></svg>, 1],
  [<svg width="25" height="32"><path d="M0 0H12V12H0Z" fill="#4789ef" /><path d="M13 0H25V12H13Z" fill="#fbc318" /><path d="M0 14H12V24L0 32Z" fill="#ee5145" /><path d="M13 14H25V32L13 24Z" fill="#5fb64b" /></svg>],
  [<svg width="33" height="32"><path d="M3 2L14 0L20 14L5 22Z" fill="#f0527a" /><path d="M0 15L8 12L14 28L2 26Z" fill="#f4893c" /><path d="M22 1L32 9V26L18 32L12 24Z" fill="#3075e7" /><path d="M8 22H18L14 32L3 28Z" fill="#c44a9d" /><rect x="7" y="6" width="19" height="20" fill="#111" /><text x="9" y="17" fontSize="11" fontWeight="700" fill="#fff" fontFamily="Liberation Mono, monospace">IJ</text><path d="M9 22H17" stroke="#fff" strokeWidth="1.500" /></svg>, 1],
  [<svg width="32" height="32"><path d="M16 3L20 0Q22 6 26 8L27 3Q35 14 30 23Q25 32 15 31Q3 30 1 19Q0 11 4 5L7 8L12 6L11 9Z" fill="#ff9d2c" /><path d="M19 2Q24 10 29 12Q32 20 25 26Q34 16 27 4L21 0Z" fill="#ffdc3e" /><path d="M2 18Q5 31 17 31Q26 30 30 20Q22 28 14 25Z" fill="#f34a68" /><circle cx="16" cy="17" r="7.500" fill="#7c46cf" /><path d="M6 14Q12 11 17 15L12 18Z" fill="#ff7d2a" /></svg>],
  [<svg width="30" height="30"><circle cx="15" cy="15" r="15" fill="#e74a3a" /><path d="M2 8Q-4 24 12 30L20 18H9Z" fill="#38a552" /><path d="M29 9Q34 27 12 30L21 15L17 9Z" fill="#fbc92f" /><path d="M2 7.500Q15 -6 28.500 8H15L8 17Z" fill="#e74a3a" /><circle cx="15" cy="15" r="7" fill="#fff" /><circle cx="15" cy="15" r="5.500" fill="#4688f1" /></svg>],
  [<svg width="30" height="30"><circle cx="15" cy="15" r="14" fill="#f9f9f9" stroke="#333" strokeWidth="1.500" /><path d="M7 17Q15 30 23 17M5 17.500L8.500 16.500M25 17.500L21.500 16.500" fill="none" stroke="#222" strokeWidth="1.800" /><ellipse cx="10.500" cy="11" rx="1.500" ry="2.500" /><ellipse cx="20" cy="11" rx="1.500" ry="2.500" /></svg>],
  [<svg width="32" height="27"><path d="M0 2H10L13 5H31V25H0Z" fill="#f0c254" /><path d="M0 8H31V26H0Z" fill="#fde08b" /><path d="M5 27V14H26V27H21V19H10V27Z" fill="#329bda" /></svg>, 1],
];

export default function App() {
  return (
    <Screen>
      <Global />
      <TitleBar>
        <WordMark /><QuickSlot $w={9}><VLine $h={20} /></QuickSlot><QuickSlot $w={28}><SaveIcon /></QuickSlot><QuickSlot $w={30}><UndoIcon /></QuickSlot><QuickSlot $w={8}><Down c="#222" /></QuickSlot>
        <QuickSlot $w={36}><RedoIcon /></QuickSlot><QuickSlot $w={3}><VLine $h={20} /></QuickSlot><QuickSlot $w={17}><svg width="8" height="7"><path d="M0 0.700H8" stroke="#222" strokeWidth="1.300" /><path d="M0 3H8L4 7Z" fill="#222" /></svg></QuickSlot>
        <Title>01_尚硅谷大数据技术之实时项目-课程概述及数据采集</Title>
      </TitleBar>
      <TabRow>
        <FileTab>文件</FileTab><Tab $on $w={62}>开始</Tab>
        {tabs.map(([t, w]) => <Tab key={t} $w={w}>{t}</Tab>)}
        <TabEnd><svg width="10" height="8"><path d="M1 5L5 1L9 5L7.500 7L5 5L2.500 7Z" fill="#fff" stroke="#555" /></svg><Help>?</Help></TabEnd>
      </TabRow>
      <RibbonBar />
      <Main>
        <Navigation />
        <DocColumn>
          <DocRow>
            <Gutter />
            <Page>
              <MapFigure />
              <Heading><HBullet /><HeadNum>1.3.3</HeadNum>订单明细实付金额分摊以及交易额统计<HeadTail>(dws)</HeadTail><svg width="9" height="8"><path d="M7 0V5H1M3 3L1 5L3 7" stroke="#777" fill="none" /></svg></Heading>
              <Dashboard />
            </Page>
            <VScroll>
              <Spacer $h={7} /><svg width="13" height="2"><rect width="13" height="2" fill="#555" /></svg><Spacer $h={6} />
              <svg width="15" height="14"><path d="M2 1H10V9H2ZM6 5H14V13H6Z" fill="#eef1f4" stroke="#666" /></svg><Spacer $h={13} /><Up c="#333" s={12} /><Spacer $h={63} />
              <VThumb><Lines rows={[[0, 10], [0, 10], [0, 10], [0, 10]]} w={10} c="#888" /></VThumb>
              <Spacer $h={325} /><Down s={12} c="#444" /><Spacer $h={15} />
              <svg width="6" height="9"><path d="M0 4L3 0L6 4ZM0 8L3 4L6 8Z" fill="#333" /></svg><Spacer $h={15} />
              <svg width="9" height="9"><circle cx="4.500" cy="4.500" r="3.500" fill="#c9cdd2" stroke="#666" /></svg><Spacer $h={15} />
              <svg width="6" height="9"><path d="M0 0H6L3 4ZM0 4H6L3 8Z" fill="#333" /></svg>
            </VScroll>
          </DocRow>
          <HScroll><SideArrow left /><HThumb><svg width="9" height="8"><path d="M0.500 0V8M3 0V8M5.500 0V8M8 0V8" stroke="#777" /></svg></HThumb><SideArrow /></HScroll>
        </DocColumn>
      </Main>
      <StatusBar>
        <StatusText $w={99} $l={9} $ls={0.2}>页面: 5/29</StatusText><StatusText $w={108} $l={10} $ls={0.2}>字数: 4,961</StatusText><StatusText $w={99} $l={10} $ls={0.1}>中文(中国)</StatusText><StatusText $w={54} $l={10}>插入</StatusText>
        <ViewIcons>
          <ViewBtn $on><Doc /></ViewBtn><ViewBtn><Book /></ViewBtn><ViewBtn><WebDoc /></ViewBtn>
          <ViewBtn><svg width="14" height="14"><path d="M0 1H8M3 4H10M6 7H12M6 10H12M3 13H14" stroke="#777" /></svg></ViewBtn><ViewBtn><Lines rows={[[0, 14], [0, 14], [0, 14], [0, 14], [0, 14]]} w={14} c="#777" /></ViewBtn>
          <Zoom>100%</Zoom>
          <svg width="188" height="24"><path d="M20 11H166" stroke="#8b9299" strokeWidth="1.200" /><g fill="#eef0f2" stroke="#6f777e"><circle cx="11" cy="11" r="10.500" /><circle cx="172" cy="11" r="10.500" /><path d="M86 3H97V14L91.500 20L86 14Z" /></g><path d="M6 11H16M167 11H177M172 6V16" stroke="#555" strokeWidth="2" /></svg>
        </ViewIcons>
      </StatusBar>
      <TaskBar>
        <TaskButton $w={72} $pr={6}><WindowsLogo /></TaskButton>
        {appIcons.map(([icon, run], i) => <TaskButton key={i}>{icon}{run && <Running />}</TaskButton>)}
        <TaskButton $on $w={68}><WordTask /><Running $full /></TaskButton>
        <Ime>拼</Ime>
        <Tray>
          <svg width="18" height="10"><path d="M1 9L9 1L17 9" stroke="#fff" strokeWidth="1.600" fill="none" /></svg>
          <svg width="21" height="21"><path d="M6 0H15L21 6V15L15 21H6L0 15V6Z" fill="#df1410" stroke="#f3b8b0" strokeWidth="0.700" /></svg>
          <svg width="22" height="17" fill="none" stroke="#fff" strokeWidth="1.400"><rect x="6" y="4" width="14" height="11" /><path d="M21.500 7V12M1 1V5H5V1M3 5V13H6" /><rect x="9" y="7" width="6" height="5" fill="#fff" /></svg>
          <svg width="24" height="22" fill="none" stroke="#fff" strokeWidth="1.400"><path d="M6 3H22V15H6M1 1H5V7H1ZM3 7V18H13" /><path d="M17 11L23 21H11Z" fill="#f8c029" stroke="none" /><path d="M17 14V18M17 19V20" stroke="#000" /></svg>
          <svg width="20" height="18" fill="none" stroke="#fff" strokeWidth="1.400"><path d="M1 6H4L9 1V17L4 12H1ZM12 6Q14 9 12 12M15 4Q18 9 15 14" /><path d="M18 1Q23 9 18 17" stroke="#777" /></svg>
        </Tray>
        <Clock>14:26<br />2020/10/17</Clock>
      </TaskBar>
      <CastBar>
        <Grip />{castA.map(([t, ml, off], i) => <CastButton key={i} $ml={i ? ml : 10} $off={off}>{t}</CastButton>)}
        <Grip $ml={11} /><CastIcon $ml={7}><Pin /></CastIcon>{castB.map(([t, ml, off], i) => <CastButton key={i} $ml={ml} $off={off}>{t}</CastButton>)}
        <CastIcon $ml={11}><LampMonitor /></CastIcon><CastIcon $ml={9}><TwoMonitors /></CastIcon><CastIcon $ml={11}><Speaker /></CastIcon><Grip $ml={10} />
      </CastBar>
      <CloseX><svg width="15" height="15"><path d="M1 1L14 14M14 1L1 14" stroke="#222" strokeWidth="1.200" /></svg></CloseX>
      <InkLayer width="1521" height="856">{strokes.map(p => <polyline key={p} points={p} />)}</InkLayer>
    </Screen>
  );
}
